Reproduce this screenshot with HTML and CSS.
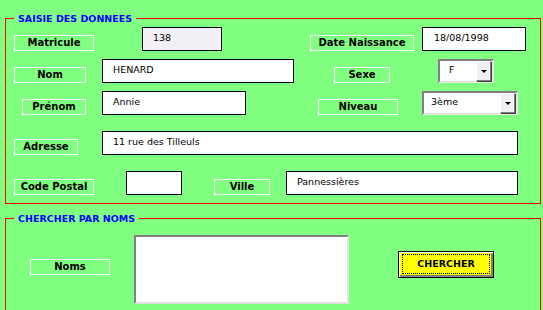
FILE: index.html
```html
<!DOCTYPE html>
<html lang="fr">
<head>
    <meta charset="UTF-8">
    <title>Saisie des données</title>
    <link rel="stylesheet" href="styles.css">
</head>
<body>
    <fieldset class="group group-saisie">
        <legend>SAISIE DES DONNEES</legend>

        <div class="row row-1">
            <div class="lbl lbl-matricule">Matricule</div>
            <div class="field field-matricule">138</div>
            <div class="lbl lbl-date">Date Naissance</div>
            <div class="field field-date">18/08/1998</div>
        </div>

        <div class="row row-2">
            <div class="lbl lbl-nom">Nom</div>
            <div class="field field-nom">HENARD</div>
            <div class="lbl lbl-sexe">Sexe</div>
            <div class="combo combo-sexe">
                <span class="combo-value">F</span>
                <span class="combo-btn"><span class="arrow"></span></span>
            </div>
        </div>

        <div class="row row-3">
            <div class="lbl lbl-prenom">Prénom</div>
            <div class="field field-prenom">Annie</div>
            <div class="lbl lbl-niveau">Niveau</div>
            <div class="combo combo-niveau">
                <span class="combo-value">3ème</span>
                <span class="combo-btn"><span class="arrow"></span></span>
            </div>
        </div>

        <div class="row row-4">
            <div class="lbl lbl-adresse">Adresse</div>
            <div class="field field-adresse">11 rue des Tilleuls</div>
        </div>

        <div class="row row-5">
            <div class="lbl lbl-cp">Code Postal</div>
            <div class="field field-cp"></div>
            <div class="lbl lbl-ville">Ville</div>
            <div class="field field-ville">Pannessières</div>
        </div>
    </fieldset>

    <fieldset class="group group-search">
        <legend>CHERCHER PAR NOMS</legend>
        <div class="search-row">
            <div class="lbl lbl-noms">Noms</div>
            <div class="listbox"></div>
            <button class="btn-search"><span>CHERCHER</span></button>
        </div>
    </fieldset>
</body>
</html>
```
FILE: styles.css
```css
body {
    margin: 0;
    background-color: #80ff80;
    font-family: "DejaVu Sans", Verdana, sans-serif;
    color: #000;
}
.group {
    box-sizing: border-box;
    width: 536px;
    margin: 0 0 0 5px;
    padding: 2px 0 8px 0;
    border: 1px solid #ff0000;
    min-width: 0;
}
.group-saisie {
    margin-top: 12px;
}
.group-search {
    margin-top: 8px;
    height: 120px;
}
legend {
    margin-left: 8px;
    padding: 0 4px;
    font-size: 9.5px;
    font-weight: bold;
    line-height: 13px;
    color: #0000ff;
}
.row {
    display: flex;
    align-items: flex-end;
    height: 24px;
}
.row-2, .row-3 {
    margin-top: 8px;
}
.row-4, .row-5 {
    margin-top: 16px;
}
.lbl {
    box-sizing: border-box;
    height: 16px;
    border: 1px solid #fff;
    font-size: 10px;
    font-weight: bold;
    line-height: 14px;
    text-align: center;
    white-space: nowrap;
}
.field {
    box-sizing: border-box;
    height: 24px;
    border: 1px solid #000;
    background: #fff;
    padding: 3px 0 0 10px;
    font-size: 9.5px;
    line-height: 13px;
    white-space: nowrap;
}

/* row 1 */
.lbl-matricule { margin-left: 8px; width: 80px; }
.field-matricule { margin-left: 48px; width: 80px; background: #f3eff6; }
.lbl-date { margin-left: 88px; width: 104px; }
.field-date { margin-left: 8px; width: 104px; padding-left: 11px; }

/* row 2 */
.lbl-nom { margin-left: 8px; width: 72px; }
.field-nom { margin-left: 16px; width: 192px; }
.lbl-sexe { margin-left: 40px; width: 56px; }
.combo-sexe { margin-left: 48px; width: 56px; }
.combo-sexe .combo-value { padding-left: 9px; }

/* row 3 */
.lbl-prenom { margin-left: 16px; width: 64px; }
.field-prenom { margin-left: 16px; width: 144px; }
.lbl-niveau { margin-left: 72px; width: 80px; }
.combo-niveau { margin-left: 24px; width: 96px; }
.combo-niveau .combo-value { padding-left: 7px; }

/* row 4 */
.lbl-adresse { margin-left: 8px; width: 64px; }
.field-adresse { margin-left: 24px; width: 416px; }

/* row 5 */
.lbl-cp { margin-left: 8px; width: 80px; }
.field-cp { margin-left: 32px; width: 56px; }
.lbl-ville { margin-left: 32px; width: 56px; }
.field-ville { margin-left: 16px; width: 232px; }

.combo {
    box-sizing: border-box;
    display: flex;
    height: 24px;
    border: 2px solid;
    border-color: #808080 #e4e4e4 #e4e4e4 #808080;
    background: #fff;
}
.combo-value {
    flex: 1;
    padding-top: 2px;
    font-size: 9.5px;
    line-height: 13px;
}
.combo-btn {
    box-sizing: border-box;
    display: flex;
    align-items: center;
    justify-content: center;
    width: 15px;
    height: 20px;
    background: #f0eff4;
    border: 1px solid;
    border-color: #fff #808080 #808080 #fff;
    box-shadow: 1px 1px 0 #404040;
    margin-right: 1px;
}
.arrow {
    width: 0;
    height: 0;
    border-left: 3px solid transparent;
    border-right: 3px solid transparent;
    border-top: 3px solid #000;
}

.search-row {
    display: flex;
    align-items: flex-start;
    margin-top: 8px;
}
.lbl-noms {
    margin-left: 24px;
    margin-top: 24px;
    width: 80px;
}
.listbox {
    box-sizing: border-box;
    margin-left: 24px;
    width: 215px;
    height: 69px;
    border: 2px solid;
    border-color: #808080 #e0e0e0 #e0e0e0 #808080;
    background: #fff;
}
.btn-search {
    box-sizing: border-box;
    margin-left: 49px;
    margin-top: 16px;
    width: 96px;
    height: 27px;
    padding: 2px 3px 3px 3px;
    border: 1px solid #000;
    background: #ffff00;
    box-shadow: inset 1px 1px 0 #fff, inset -2px -2px 0 #808080;
    font-family: "DejaVu Sans", Verdana, sans-serif;
    font-size: 9.5px;
    font-weight: bold;
    color: #000;
}
.btn-search span {
    display: block;
    box-sizing: border-box;
    height: 100%;
    border: 1px dotted #000;
    line-height: 18px;
}
```
